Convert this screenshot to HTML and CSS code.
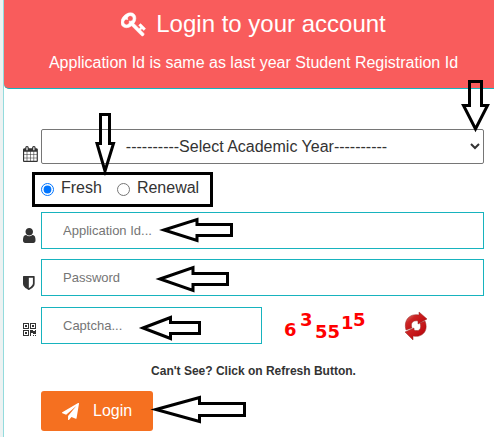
FILE: index.html
```html
<!DOCTYPE html>
<html lang="en">
<head>
    <meta charset="UTF-8">
    <meta name="viewport" content="width=device-width, initial-scale=1.0">
    <title>Login to your account</title>
    <link rel="stylesheet" href="styles.css">
</head>
<body>
    <div class="card">
        <header class="card-header">
            <h1>
                <svg class="key-icon" viewBox="0 0 1792 1792" aria-hidden="true"><path d="M832 512q0-80-56-136t-136-56-136 56-56 136q0 42 19 83-41-19-83-19-80 0-136 56t-56 136 56 136 136 56 136-56 56-136q0-42-19-83 41 19 83 19 80 0 136-56t56-136zm851 704q0 17-49 66t-66 49q-9 0-28.5-16t-36.5-33-38.5-40-24.5-26l-96 96 220 220q28 28 28 68 0 42-39 81t-81 39q-40 0-68-28l-671-671q-176 131-365 131-163 0-265.5-102.5t-102.5-265.5q0-160 95-313t248-248 313-95q163 0 265.5 102.5t102.5 265.5q0 189-131 365l355 355 96-96q-3-3-26-24.5t-40-38.5-33-36.5-16-28.5q0-17 49-66t66-49q13 0 23 10 6 6 46 44.5t82 79.5 86.5 86 73 78 28.5 41z"/></svg>
                Login to your account
            </h1>
            <p>Application Id is same as last year Student Registration Id</p>
        </header>

        <form class="login-form">
            <div class="form-row year-row">
                <svg class="icon" width="15" height="16" viewBox="64 0 1664 1792" preserveAspectRatio="xMinYMid" aria-hidden="true"><path d="M192 1664h288v-288h-288v288zm352 0h320v-288h-320v288zm-352-352h288v-320h-288v320zm352 0h320v-320h-320v320zm-352-384h288v-288h-288v288zm736 736h320v-288h-320v288zm-384-736h320v-288h-320v288zm768 736h288v-288h-288v288zm-384-352h320v-320h-320v320zm-352-864v-288q0-13-9.5-22.5t-22.5-9.5h-64q-13 0-22.5 9.5t-9.5 22.5v288q0 13 9.5 22.5t22.5 9.5h64q13 0 22.5-9.5t9.5-22.5zm736 864h288v-320h-288v320zm-384-384h320v-288h-320v288zm384 0h288v-288h-288v288zm32-480v-288q0-13-9.5-22.5t-22.5-9.5h-64q-13 0-22.5 9.5t-9.5 22.5v288q0 13 9.5 22.5t22.5 9.5h64q13 0 22.5-9.5t9.5-22.5zm384-64v1280q0 52-38 90t-90 38h-1408q-52 0-90-38t-38-90v-1280q0-52 38-90t90-38h128v-96q0-66 47-113t113-47h64q66 0 113 47t47 113v96h384v-96q0-66 47-113t113-47h64q66 0 113 47t47 113v96h128q52 0 90 38t38 90z"/></svg>
                <select id="year" aria-label="Academic Year">
                    <option>----------Select Academic Year----------</option>
                </select>
            </div>

            <div class="radio-row">
                <input type="radio" name="type" id="fresh" checked>
                <label for="fresh">Fresh</label>
                <input type="radio" name="type" id="renewal">
                <label for="renewal">Renewal</label>
            </div>

            <div class="form-row">
                <svg class="icon" width="13" height="15" viewBox="256 128 1280 1536" preserveAspectRatio="xMinYMid" aria-hidden="true"><path d="M1536 1399q0 109-62.5 187t-150.5 78h-854q-88 0-150.5-78t-62.5-187q0-85 8.5-160.5t31.5-152 58.5-131 94-89 134.5-34.5q131 128 313 128t313-128q76 0 134.5 34.5t94 89 58.5 131 31.5 152 8.5 160.5zm-256-887q0 159-112.5 271.5t-271.5 112.5-271.5-112.5-112.5-271.5 112.5-271.5 271.5-112.5 271.5 112.5 112.5 271.5z"/></svg>
                <input type="text" id="appId" class="text-input" placeholder="Application Id..." aria-label="Application Id">
            </div>

            <div class="form-row">
                <svg class="icon" width="12" height="14" viewBox="256 128 1280 1536" preserveAspectRatio="xMinYMid" aria-hidden="true"><path d="M1344 960v-640h-448v1137q119-63 213-137 235-184 235-360zm192-768v768q0 86-33.5 170.5t-83 150-118 127.5-126.5 103-121 77.5-89.5 49.5-42.5 20q-12 6-26 6t-26-6q-16-7-42.5-20t-89.5-49.5-121-77.5-126.5-103-118-127.5-83-150-33.5-170.5v-768q0-26 19-45t45-19h1152q26 0 45 19t19 45z"/></svg>
                <input type="password" id="password" class="text-input" placeholder="Password" aria-label="Password">
            </div>

            <div class="form-row captcha-row">
                <svg class="icon" width="13" height="13" viewBox="0 0 13 13" preserveAspectRatio="xMinYMid" aria-hidden="true"><path fill-rule="evenodd" d="M0 0h6v6H0zM1 1v4h4V1zM7 0h6v6H7zM8 1v4h4V1zM0 7h6v6H0zM1 8v4h4V8zM2 2h2v2H2zM9 2h2v2H9zM2 9h2v2H2zM7 7h3v1h2V7h1v4h-3v-1H8v3H7zM10 12h1v1h-1zM12 12h1v1h-1z"/></svg>
                <input type="text" id="captcha" class="text-input" placeholder="Captcha..." aria-label="Captcha">
                <svg class="captcha-code" width="90" height="34" viewBox="0 0 90 34">
                    <text x="0" y="27">6</text>
                    <text x="16" y="17">3</text>
                    <text x="31" y="29">55</text>
                    <text x="57" y="20">1</text>
                    <text x="69" y="17">5</text>
                </svg>
                <button type="button" class="refresh" aria-label="Refresh">
                    <svg width="24" height="30" viewBox="0 0 24 30">
                        <defs>
                            <linearGradient id="redShade" x1="0" y1="0" x2="1" y2="1">
                                <stop offset="0" stop-color="#dfa59a"/>
                                <stop offset="0.35" stop-color="#cc2424"/>
                                <stop offset="0.7" stop-color="#c00d12"/>
                                <stop offset="1" stop-color="#7c1714"/>
                            </linearGradient>
                        </defs>
                        <g fill="url(#redShade)" stroke="#962522" stroke-width="0.5">
                            <path d="M2 19C-1 9 6 2 15 4L15 1L23 8L14 13V10C9 9 6 12 8 17Z"/>
                            <path d="M21 10C25 20 18 27 9 25V29L1 21L10 17V19C15 21 18 18 16 12Z"/>
                        </g>
                    </svg>
                </button>
            </div>

            <p class="hint">Can't See? Click on Refresh Button.</p>

            <button type="submit" class="login-btn">
                <svg width="17" height="17" viewBox="0 0 1792 1792" aria-hidden="true"><path d="M1764 11q33 24 27 64l-256 1536q-5 29-32 45-14 8-31 8-11 0-24-5l-453-185-242 295q-18 23-49 23-13 0-22-4-19-7-30.5-23.5t-11.5-36.5v-349l864-1059-1069 925-395-162q-37-14-40-55-2-40 32-59l1664-960q15-9 32-9 20 0 36 11z"/></svg>
                Login
            </button>
        </form>
    </div>

    <!-- guide arrows over the form -->
    <svg class="guide" width="494" height="437" viewBox="0 0 494 437" aria-hidden="true">
        <rect x="33.5" y="173.5" width="178" height="32"/>
        <path d="M100.500 114.500h9v29h4L105 171L97 143.500h3.500z"/>
        <path d="M469.500 81.500h12v24h6L475.500 129L463.500 105.500h6z"/>
        <path d="M164 230L197 219.500V224.500H231.500V235.500H197V240.500Z"/>
        <path d="M160 279L193 267.500V273.500H227.500V284.500H193V290.500Z"/>
        <path d="M143 328L170.500 317.500V322.500H199.500V333.500H170.500V338.500Z"/>
        <path d="M156 409.500L199.500 397.500V403.500H244.500V415.500H199.500V421.500Z"/>
    </svg>
</body>
</html>
```
FILE: styles.css
```css
* {
    box-sizing: border-box;
}

body {
    margin: 0;
    padding-left: 3px;
    background-color: #edf2f2;
    font-family: Arial, "Liberation Sans", sans-serif;
    font-size: 16px;
    color: #333;
    position: relative;
}

.card {
    min-height: 100vh;
    background-color: #fff;
    border-left: 1px solid #93dbdd;
}

.card-header {
    padding: 6px 10px 15px 19px;
    background-color: #f95c5c;
    border-bottom: 1px solid #17b3be;
    border-radius: 0 0 0 5px;
    color: #fff;
    text-align: center;
}

.card-header h1 {
    display: flex;
    justify-content: center;
    align-items: center;
    gap: 9px;
    margin: 0 0 11px;
    font-size: 24px;
    font-weight: normal;
    line-height: 36px;
}

.card-header p {
    margin: 0;
    line-height: 20px;
}

.key-icon {
    width: 26px;
    height: 26px;
    fill: #fff;
    stroke: #fff;
    stroke-width: 40;
}

.login-form {
    padding: 40px 10px 6px 19px;
}

.form-row {
    display: flex;
    align-items: flex-end;
    margin-bottom: 10px;
}

.form-row .icon {
    flex: none;
    box-sizing: content-box;
    width: 18px;
    padding-bottom: 6px;
    fill: #333;
}

.year-row {
    margin-bottom: 8px;
}

.year-row .icon {
    padding-bottom: 2px;
}

select {
    flex: 1;
    min-width: 0;
    height: 35px;
    padding: 0;
    border: 1px solid #767676;
    border-radius: 2px;
    background-color: #fff;
    font: inherit;
    color: #333;
    text-align: center;
}

.radio-row {
    display: flex;
    align-items: center;
    height: 32px;
    margin-bottom: 8px;
    padding-left: 18px;
}

.radio-row input {
    width: 13px;
    height: 13px;
    margin: 2px 7px 0 0;
    accent-color: #0075ff;
}

.radio-row label {
    margin-right: 15px;
}

.text-input {
    flex: 1;
    min-width: 0;
    height: 37px;
    padding: 0 21px;
    border: 1px solid #17b3be;
    background-color: #fff;
    font-family: inherit;
    font-size: 13px;
    color: #333;
}

.text-input::placeholder {
    color: #757575;
}

.captcha-row {
    margin: 11px 0 0;
}

.captcha-row .icon {
    padding-bottom: 8px;
}

.captcha-code {
    margin-left: 22px;
    align-self: center;
    fill: #f00;
    font-family: "DejaVu Sans", Verdana, sans-serif;
    font-size: 18px;
    font-weight: bold;
}

.refresh {
    margin: 0 56px 0 30px;
    padding: 0;
    align-self: center;
    border: none;
    background: none;
    cursor: pointer;
}

.refresh svg {
    display: block;
}

.hint {
    margin: 19px 0 11px;
    font-size: 12px;
    font-weight: bold;
    line-height: 17px;
    text-align: center;
}

.login-btn {
    display: flex;
    align-items: center;
    gap: 14px;
    height: 40px;
    margin-left: 18px;
    padding: 0 21px;
    border: none;
    border-radius: 3px;
    background-color: #f57020;
    color: #fff;
    font: inherit;
    cursor: pointer;
}

.login-btn svg {
    fill: #fff;
}

.guide {
    position: absolute;
    top: 0;
    left: 0;
    pointer-events: none;
    fill: none;
    stroke: #000;
    stroke-width: 3;
}
```
